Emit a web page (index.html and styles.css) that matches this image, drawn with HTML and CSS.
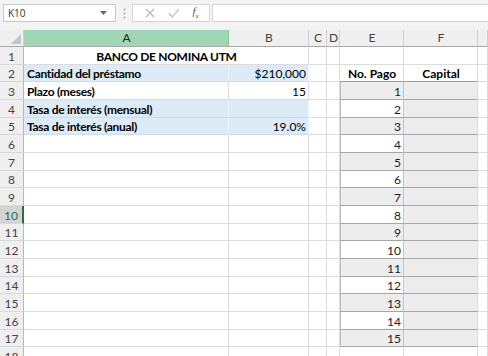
FILE: index.html
```
<!DOCTYPE html>
<html lang="es">
<head>
    <meta charset="UTF-8">
    <meta name="viewport" content="width=device-width, initial-scale=1.0">
    <title>Banco de Nomina UTM</title>
    <link rel="stylesheet" href="styles.css">
</head>
<body>

    <!-- Barra de fórmulas -->
    <div class="barra">
        <div class="nombre">
            <span>K10</span>
            <svg class="flecha" width="7" height="4" viewBox="0 0 7 4"><path d="M0 0h7L3.5 4z" fill="#666"/></svg>
        </div>
        <div class="puntos">
            <svg width="3" height="11" viewBox="0 0 3 11"><circle cx="1.5" cy="1.5" r="1" fill="#aaa"/><circle cx="1.5" cy="5.5" r="1" fill="#aaa"/><circle cx="1.5" cy="9.5" r="1" fill="#aaa"/></svg>
        </div>
        <div class="botones">
            <svg width="10" height="10" viewBox="0 0 10 10"><path d="M1 1l8 8M9 1l-8 8" stroke="#b4b4b4" stroke-width="1.1" fill="none"/></svg>
            <svg width="12" height="10" viewBox="0 0 12 10"><path d="M1 5.5l3.5 3.5L11 1" stroke="#b4b4b4" stroke-width="1.1" fill="none"/></svg>
            <span class="fx">f<sub>x</sub></span>
        </div>
        <div class="entrada"></div>
    </div>

    <!-- Hoja -->
    <div class="hoja">
        <div class="fila cabecera">
            <div class="esquina"><svg width="10" height="10" viewBox="0 0 10 10"><path d="M10 0V10H0z" fill="#c4c4c4"/></svg></div>
            <div class="col activa">A</div>
            <div class="col">B</div>
            <div class="col">C</div>
            <div class="col">D</div>
            <div class="col">E</div>
            <div class="col">F</div>
            <div class="col"></div>
        </div>

        <div class="fila">
            <div class="num">1</div>
            <div class="negrita centro etiqueta doble">BANCO DE NOMINA UTM</div>
            <div></div><div></div><div></div><div></div><div></div>
        </div>
        <div class="fila corta">
            <div class="num">2</div>
            <div class="negrita azul etiqueta">Cantidad del préstamo</div>
            <div class="azul derecha dato">$210,000</div>
            <div></div><div></div>
            <div class="negrita centro titulo">No. Pago</div>
            <div class="negrita centro titulo">Capital</div>
            <div></div>
        </div>
        <div class="fila">
            <div class="num">3</div>
            <div class="negrita etiqueta">Plazo (meses)</div>
            <div class="derecha oscuro">15</div>
            <div></div><div></div>
            <div class="pago gris">1</div>
            <div class="capital"></div>
            <div></div>
        </div>
        <div class="fila">
            <div class="num">4</div>
            <div class="negrita azul etiqueta">Tasa de interés (mensual)</div>
            <div class="azul"></div>
            <div></div><div></div>
            <div class="pago">2</div>
            <div class="capital"></div>
            <div></div>
        </div>
        <div class="fila corta">
            <div class="num">5</div>
            <div class="negrita azul etiqueta">Tasa de interés (anual)</div>
            <div class="azul derecha dato">19.0%</div>
            <div></div><div></div>
            <div class="pago gris">3</div>
            <div class="capital"></div>
            <div></div>
        </div>
        <div class="fila">
            <div class="num">6</div>
            <div></div><div></div><div></div><div></div>
            <div class="pago">4</div>
            <div class="capital"></div>
            <div></div>
        </div>
        <div class="fila">
            <div class="num">7</div>
            <div></div><div></div><div></div><div></div>
            <div class="pago gris">5</div>
            <div class="capital"></div>
            <div></div>
        </div>
        <div class="fila corta">
            <div class="num">8</div>
            <div></div><div></div><div></div><div></div>
            <div class="pago">6</div>
            <div class="capital"></div>
            <div></div>
        </div>
        <div class="fila">
            <div class="num">9</div>
            <div></div><div></div><div></div><div></div>
            <div class="pago gris">7</div>
            <div class="capital"></div>
            <div></div>
        </div>
        <div class="fila">
            <div class="num sel">10</div>
            <div></div><div></div><div></div><div></div>
            <div class="pago">8</div>
            <div class="capital"></div>
            <div></div>
        </div>
        <div class="fila corta">
            <div class="num">11</div>
            <div></div><div></div><div></div><div></div>
            <div class="pago gris">9</div>
            <div class="capital"></div>
            <div></div>
        </div>
        <div class="fila">
            <div class="num">12</div>
            <div></div><div></div><div></div><div></div>
            <div class="pago">10</div>
            <div class="capital"></div>
            <div></div>
        </div>
        <div class="fila">
            <div class="num">13</div>
            <div></div><div></div><div></div><div></div>
            <div class="pago gris">11</div>
            <div class="capital"></div>
            <div></div>
        </div>
        <div class="fila corta">
            <div class="num">14</div>
            <div></div><div></div><div></div><div></div>
            <div class="pago">12</div>
            <div class="capital"></div>
            <div></div>
        </div>
        <div class="fila">
            <div class="num">15</div>
            <div></div><div></div><div></div><div></div>
            <div class="pago gris">13</div>
            <div class="capital"></div>
            <div></div>
        </div>
        <div class="fila">
            <div class="num">16</div>
            <div></div><div></div><div></div><div></div>
            <div class="pago">14</div>
            <div class="capital"></div>
            <div></div>
        </div>
        <div class="fila corta">
            <div class="num">17</div>
            <div></div><div></div><div></div><div></div>
            <div class="pago gris">15</div>
            <div class="capital"></div>
            <div></div>
        </div>
        <div class="fila">
            <div class="num">18</div>
            <div></div><div></div><div></div><div></div><div></div><div></div><div></div>
        </div>
    </div>

</body>
</html>
```

FILE: styles.css
```
body {
    margin: 0;
    width: 488px;
    height: 356px;
    overflow: hidden;
    background-color: #fff;
    font-family: Lato, "Liberation Sans", sans-serif;
}

/* Barra de fórmulas */
.barra {
    display: flex;
    height: 18px;
    padding: 4px 0 8px 3px;
    background-color: #f3f3f3;
}

.nombre {
    width: 113px;
    box-sizing: border-box;
    border: 1px solid #c8c8c8;
    background-color: #fff;
    display: flex;
    align-items: center;
    justify-content: space-between;
    padding: 0 8px 0 4px;
    font-family: "Open Sans", sans-serif;
    font-size: 10px;
    color: #333;
}

.puntos {
    width: 16px;
    display: flex;
    align-items: center;
    justify-content: center;
}

.botones {
    width: 78px;
    box-sizing: border-box;
    border: 1px solid #d6d6d6;
    background-color: #fff;
    display: flex;
    align-items: center;
    justify-content: space-around;
    padding: 0 4px 0 6px;
}

.fx {
    font-family: "Liberation Serif", serif;
    font-style: italic;
    font-size: 11px;
    color: #555;
}

.fx sub {
    font-size: 7px;
}

.entrada {
    flex: 1;
    margin-left: 2px;
    border: 1px solid #d6d6d6;
    border-right: none;
    background-color: #fff;
}

/* Hoja de cálculo */
.fila {
    display: grid;
    grid-template-columns: 24px 205px 80px 18px 13px 64px 74px 1fr;
    height: 18px;
}

.fila.corta {
    height: 17px;
}

.fila > div {
    box-sizing: border-box;
    border-right: 1px solid #dadcdd;
    border-bottom: 1px solid #dadcdd;
    display: flex;
    align-items: flex-end;
    padding: 0 2px 0 3px;
    font-size: 12px;
    line-height: 14px;
    color: #000;
    white-space: nowrap;
}

.fila.cabecera {
    height: 17px;
}

.fila.cabecera > div {
    background-color: #efefef;
    border-right-color: #cfcfcf;
    border-bottom-color: #ababab;
    align-items: center;
    justify-content: center;
    color: #444;
}

.fila.cabecera .activa {
    background-color: #a0d6b4;
    border-right-color: #8cc2a0;
    color: #222;
}

.fila.cabecera .esquina {
    align-items: flex-end;
    justify-content: flex-end;
    padding: 0 2px 2px 0;
}

.fila > .num {
    justify-content: center;
    padding: 0;
    background-color: #efefef;
    border-right-color: #b9b9b9;
    border-bottom-color: #d8d8d8;
    color: #444;
}

.fila > .num.sel {
    background-color: #d3d3d3;
    color: #217346;
    border-right: 2px solid #217346;
}

.negrita {
    font-weight: bold;
}

.etiqueta {
    letter-spacing: -0.3px;
}

.doble {
    grid-column: span 2;
}

.fila > .centro {
    justify-content: center;
}

.fila > .derecha {
    justify-content: flex-end;
}

.fila > .azul {
    background-color: #ddebf7;
    border-right-color: #eef4fb;
    border-bottom-color: #cfdbe8;
}

.dato {
    color: #305496;
}

.oscuro {
    color: #1f3864;
}

.fila > .titulo {
    border-bottom-color: #9c9c9c;
}

.fila > .pago {
    justify-content: flex-end;
    color: #222;
    border-right-color: #c4c4c4;
    border-bottom-color: #a6a6a6;
    box-shadow: inset 1px 0 0 #bdbdbd;
}

.fila > .gris,
.fila > .capital {
    background-color: #ededed;
}

.fila > .capital {
    border-bottom-color: #a6a6a6;
}
```
